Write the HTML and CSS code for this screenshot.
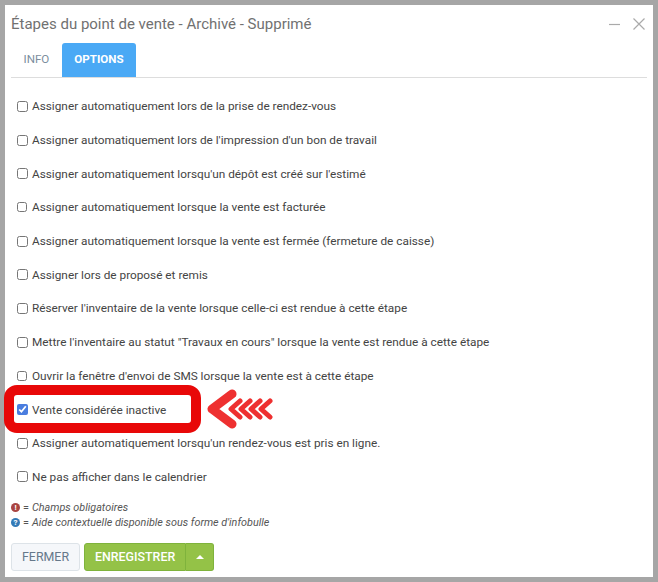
FILE: index.html

```html
<!DOCTYPE html>
<html lang="fr">
<head>
    <meta charset="UTF-8">
    <meta name="viewport" content="width=device-width, initial-scale=1.0">
    <title>Étapes du point de vente</title>
    <link rel="stylesheet" href="styles.css">
</head>
<body>
    <div class="modal">
        <div class="modal-header">
            <h1>Étapes du point de vente - Archivé - Supprimé</h1>
            <div class="window-btns">
                <svg width="14" height="14" viewBox="0 0 14 14"><path d="M1 7.5H12" stroke="#aaa" stroke-width="1.2"/></svg>
                <svg width="14" height="14" viewBox="0 0 14 14"><path d="M1.5 1.5L12.5 12.5M12.5 1.5L1.5 12.5" stroke="#aaa" stroke-width="1.2"/></svg>
            </div>
        </div>
        <div class="tabs">
            <a class="tab">INFO</a>
            <a class="tab active">OPTIONS</a>
        </div>
        <div class="options">
            <label class="option"><input type="checkbox">Assigner automatiquement lors de la prise de rendez-vous</label>
            <label class="option"><input type="checkbox">Assigner automatiquement lors de l'impression d'un bon de travail</label>
            <label class="option"><input type="checkbox">Assigner automatiquement lorsqu'un dépôt est créé sur l'estimé</label>
            <label class="option small"><input type="checkbox">Assigner automatiquement lorsque la vente est facturée</label>
            <label class="option"><input type="checkbox">Assigner automatiquement lorsque la vente est fermée (fermeture de caisse)</label>
            <label class="option"><input type="checkbox">Assigner lors de proposé et remis</label>
            <label class="option"><input type="checkbox">Réserver l'inventaire de la vente lorsque celle-ci est rendue à cette étape</label>
            <label class="option"><input type="checkbox">Mettre l'inventaire au statut "Travaux en cours" lorsque la vente est rendue à cette étape</label>
            <label class="option small"><input type="checkbox">Ouvrir la fenêtre d'envoi de SMS lorsque la vente est à cette étape</label>
            <label class="option"><input type="checkbox" checked>Vente considérée inactive</label>
            <label class="option"><input type="checkbox">Assigner automatiquement lorsqu'un rendez-vous est pris en ligne.</label>
            <label class="option"><input type="checkbox">Ne pas afficher dans le calendrier</label>
        </div>
        <div class="legend">
            <div class="legend-row"><span class="dot dot-red">!</span>= <em>Champs obligatoires</em></div>
            <div class="legend-row"><span class="dot dot-blue">?</span>= <em>Aide contextuelle disponible sous forme d'infobulle</em></div>
        </div>
        <div class="footer">
            <button class="btn btn-close">FERMER</button>
            <div class="btn-group">
                <button class="btn btn-save">ENREGISTRER</button>
                <button class="btn btn-save btn-caret"><span class="caret"></span></button>
            </div>
        </div>

        <!-- annotation par dessus la capture -->
        <div class="highlight"></div>
        <svg class="arrows" width="68" height="44" viewBox="0 0 68 44" fill="none" stroke="#ee3030" stroke-linecap="round" stroke-linejoin="round">
            <path d="M26 6L6 21L26 36" stroke-width="9"/>
            <path d="M34 13L25 21L34 29M44 13L35 21L44 29M54 13L45 21L54 29M64 13L55 21L64 29" stroke-width="5"/>
        </svg>
    </div>
</body>
</html>
```

FILE: styles.css

```css
html, body {
    height: 100%;
}
body {
    margin: 0;
    padding: 5px;
    box-sizing: border-box;
    background-color: #a6a6a6;
    font-family: Roboto, Arial, sans-serif;
    color: #4a4a4a;
    overflow: hidden;
}
.modal {
    position: relative;
    height: 572px;
    padding: 0 6px;
    background: white;
}
.modal-header {
    display: flex;
    justify-content: space-between;
    align-items: center;
    height: 38px;
}
.modal-header h1 {
    margin: 0;
    font-size: 15px;
    font-weight: 400;
    color: #717171;
}
.window-btns {
    display: flex;
    gap: 10px;
    padding-right: 1px;
}
.tabs {
    display: flex;
    height: 34px;
    border-bottom: 1px solid #ddd;
}
.tab {
    padding: 0 12.5px;
    line-height: 33px;
    font-size: 11.6px;
    color: #7b8e9e;
}
.tab.active {
    background-color: #4aa9f5;
    border-radius: 3px 3px 0 0;
    color: white;
    font-weight: 700;
}
.options {
    display: flex;
    flex-direction: column;
    padding: 11.5px 0 0 6px;
}
.option {
    display: flex;
    align-items: center;
    height: 33.7px;
    font-size: 11.8px;
    color: #444;
}
.option input {
    width: 11px;
    height: 11px;
    margin: 0 4px 0 0;
    accent-color: #4a7ddf;
}
.option.small input {
    width: 10px;
    height: 10px;
    margin-right: 5px;
}
.legend {
    margin-top: 5.8px;
    font-size: 10.8px;
    color: #555;
}
.legend-row {
    display: flex;
    align-items: center;
    gap: 3px;
    height: 15px;
}
.dot {
    width: 9px;
    height: 9px;
    border-radius: 50%;
    color: white;
    font-size: 8px;
    font-weight: 700;
    line-height: 9px;
    text-align: center;
}
.dot-red {
    background-color: #a94442;
}
.dot-blue {
    background-color: #337ab7;
}
.footer {
    display: flex;
    gap: 4px;
    margin-top: 13px;
}
.btn {
    height: 28px;
    padding: 0 10px;
    border: 1px solid #dde3e8;
    border-radius: 3px;
    background-color: #f5f7fa;
    color: #66788a;
    font-family: Roboto, Arial, sans-serif;
    font-size: 12.4px;
}
.btn-group {
    display: flex;
}
.btn-save {
    border-color: #7fb33c;
    background-color: #94c247;
    color: white;
    font-weight: 500;
    border-radius: 3px 0 0 3px;
}
.btn-caret {
    width: 28px;
    padding: 0;
    border-left-width: 0;
    border-radius: 0 3px 3px 0;
}
.caret {
    display: block;
    width: 0;
    margin: 0 auto;
    border-left: 4px solid transparent;
    border-right: 4px solid transparent;
    border-bottom: 4px solid white;
}
.highlight {
    position: absolute;
    left: -1px;
    top: 380px;
    width: 177px;
    height: 28px;
    border: 10px solid #e80808;
    border-radius: 13px;
}
.arrows {
    position: absolute;
    left: 201px;
    top: 383px;
}
```
